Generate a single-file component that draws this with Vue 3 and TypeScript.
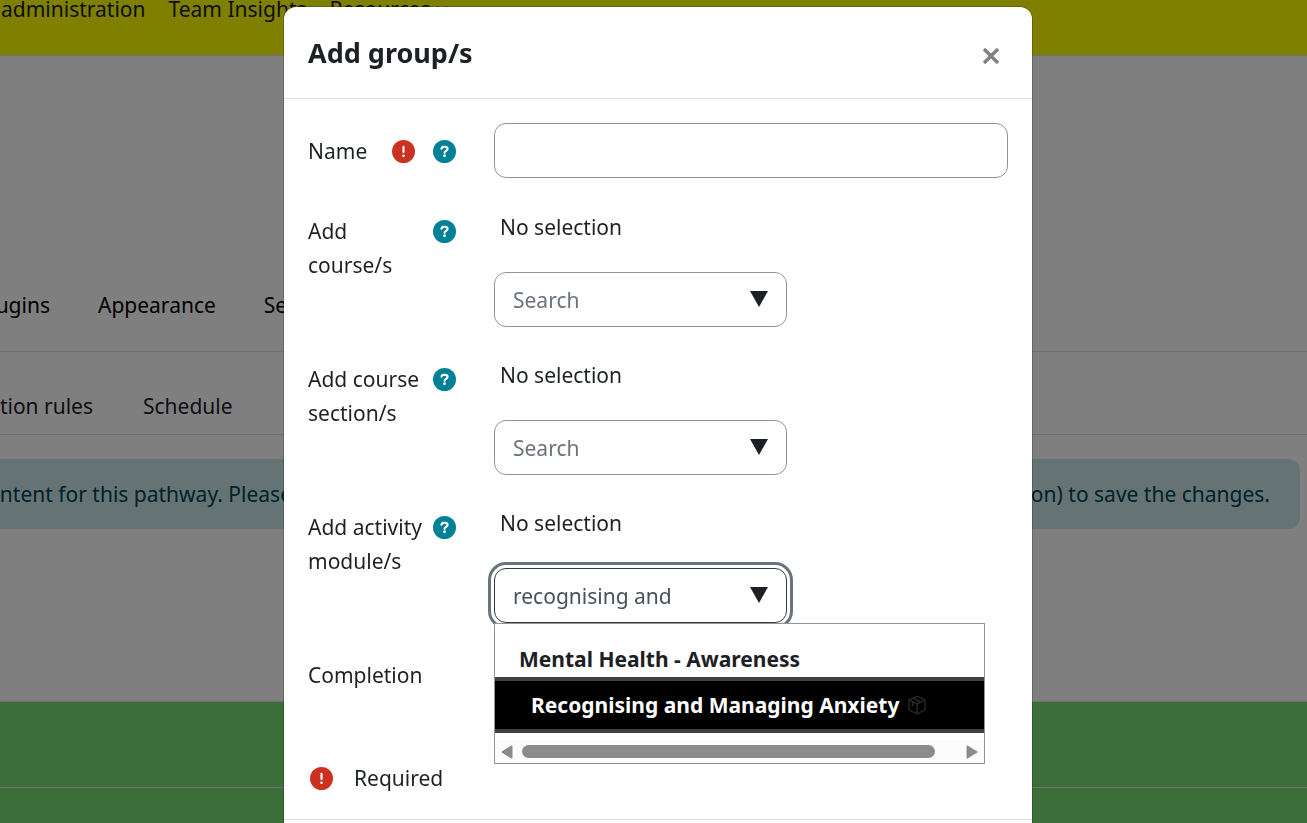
<script setup lang="ts">
import { ref } from 'vue'

interface Picker {
  id: string
  label: string
  value: string
}

const name = ref('')
const pickers = ref<Picker[]>([
  { id: 'courses', label: 'Add course/s', value: '' },
  { id: 'sections', label: 'Add course section/s', value: '' },
  { id: 'modules', label: 'Add activity module/s', value: 'recognising and' },
])
</script>

<template>
  <div class="page">
    <header class="topbar">
      <a href="#">administration</a>
      <a href="#">Team Insights</a>
      <a href="#" class="more">Resources
        <svg width="12" height="8" viewBox="0 0 12 8" aria-hidden="true"><path d="M1 1.5 6 6.5 11 1.5" fill="none" stroke="currentColor" stroke-width="1.6" /></svg>
      </a>
    </header>
    <nav class="primary">
      <a href="#" class="cut">Plugins</a>
      <a href="#">Appearance</a>
      <a href="#">Server</a>
    </nav>
    <nav class="secondary">
      <a href="#" class="cut">Completion rules</a>
      <a href="#">Schedule</a>
    </nav>
    <div class="notice">
      <span class="lead">content for this pathway. Please</span>
      <span>on) to save the changes.</span>
    </div>
    <footer class="sitefoot"><div class="rule"></div></footer>
  </div>

  <div class="overlay">
    <section class="modal" role="dialog" aria-modal="true" aria-labelledby="title">
      <header class="modal-head">
        <h2 id="title">Add group/s</h2>
        <button type="button" class="close" aria-label="Close">
          <svg width="18" height="18" viewBox="0 0 18 18"><path d="M2 2 16 16M16 2 2 16" stroke="#808080" stroke-width="3.4" /></svg>
        </button>
      </header>

      <form class="modal-body" @submit.prevent>
        <div class="row first">
          <div class="caption">
            <label for="name">Name</label>
            <span class="icons">
              <svg class="icon" viewBox="0 0 24 24" role="img" aria-label="Required"><circle cx="12" cy="12" r="12" fill="#ca3120" /><path d="M12 7.2v5.4" stroke="#fff" stroke-width="2.2" stroke-linecap="round" /><circle cx="12" cy="16.4" r="1.4" fill="#fff" /></svg>
              <button type="button" class="help" aria-label="Help with Name">
                <svg class="icon" viewBox="0 0 24 24"><circle cx="12" cy="12" r="12" fill="#008196" /><path d="M8.9 9.2C8.9 7.9 9.8 7.2 11 7.2h1.6c1.5 0 2.6 1 2.6 2.2 0 2-3.1 1.8-3.1 3.8" fill="none" stroke="#fff" stroke-width="2.2" stroke-linecap="round" /><circle cx="12" cy="16.4" r="1.5" fill="#fff" /></svg>
              </button>
            </span>
          </div>
          <input id="name" v-model="name" class="field" type="text">
        </div>

        <div v-for="p in pickers" :key="p.id" class="row">
          <div class="caption">
            <label :for="p.id">{{ p.label }}</label>
            <button type="button" class="help" :aria-label="'Help with ' + p.label">
              <svg class="icon" viewBox="0 0 24 24"><circle cx="12" cy="12" r="12" fill="#008196" /><path d="M8.9 9.2C8.9 7.9 9.8 7.2 11 7.2h1.6c1.5 0 2.6 1 2.6 2.2 0 2-3.1 1.8-3.1 3.8" fill="none" stroke="#fff" stroke-width="2.2" stroke-linecap="round" /><circle cx="12" cy="16.4" r="1.5" fill="#fff" /></svg>
            </button>
          </div>
          <div class="picker">
            <div class="chosen">No selection</div>
            <div class="combo" :class="{ active: p.value }">
              <input :id="p.id" v-model="p.value" type="text" role="combobox" placeholder="Search" :aria-expanded="!!p.value">
              <button type="button" class="arrow" aria-label="Show suggestions">
                <svg width="18" height="16" viewBox="0 0 18 16"><path d="M0 0h18L9 16Z" fill="#1d2125" /></svg>
              </button>
              <div v-if="p.value" class="menu">
                <ul role="listbox" aria-label="Suggestions">
                  <li role="option">Mental Health - Awareness</li>
                  <li role="option" class="current" aria-selected="true">
                    Recognising and Managing Anxiety
                    <svg width="20" height="20" viewBox="0 0 20 20" fill="none" stroke="#2b2e31" stroke-width="1.2" stroke-linejoin="round" aria-hidden="true"><path d="M10 1.2 18 5v10l-8 4-8-4V5ZM2 5l8 4 8-4M10 9v10M6 3.1l8 4M5.5 6.7v4.5" /></svg>
                  </li>
                </ul>
                <div class="scroll" aria-hidden="true">
                  <svg width="12" height="14" viewBox="0 0 12 14"><path d="M10.5 1.5v11L1.5 7Z" fill="#8b8b8b" stroke="#8b8b8b" stroke-width="2" stroke-linejoin="round" /></svg>
                  <div class="track"><div class="thumb"></div></div>
                  <svg width="12" height="14" viewBox="0 0 12 14"><path d="M1.5 1.5v11L10.5 7Z" fill="#8b8b8b" stroke="#8b8b8b" stroke-width="2" stroke-linejoin="round" /></svg>
                </div>
              </div>
            </div>
          </div>
        </div>

        <div class="row last">
          <div class="caption">Completion</div>
        </div>
        <div class="required">
          <svg class="icon" viewBox="0 0 24 24" aria-hidden="true"><circle cx="12" cy="12" r="12" fill="#ca3120" /><path d="M12 7.2v5.4" stroke="#fff" stroke-width="2.2" stroke-linecap="round" /><circle cx="12" cy="16.4" r="1.4" fill="#fff" /></svg>
          <span>Required</span>
        </div>
      </form>
      <footer class="modal-foot"></footer>
    </section>
  </div>
</template>

<style>
body {
  margin: 0;
  overflow: hidden;
  background: #fff;
}
#app {
  font-family: "Segoe UI", "Noto Sans", sans-serif;
  font-size: 21px;
  line-height: 34px;
  color: #1d2125;
}
</style>

<style scoped>
* { box-sizing: border-box; }
a { color: inherit; text-decoration: none; }
button { border: 0; padding: 0; background: none; cursor: pointer; }
svg { display: block; flex: none; }

.page {
  height: 100vh;
  overflow: hidden;
  display: flex;
  flex-direction: column;
  white-space: nowrap;
}
.topbar {
  flex: none;
  height: 56px;
  padding-left: 1px;
  display: flex;
  align-items: flex-start;
  gap: 23px;
  background: #ff0;
  border-bottom: 1px solid #dee2e6;
}
.topbar a { margin-top: -8px; }
.more { display: flex; align-items: center; gap: 6px; }
.primary, .secondary {
  flex: none;
  display: flex;
  border-bottom: 1px solid #dee2e6;
}
.primary {
  height: 296px;
  align-items: flex-end;
  gap: 48px;
  padding-bottom: 29px;
  color: #000;
}
.secondary {
  height: 83px;
  align-items: flex-end;
  gap: 50px;
  padding-bottom: 11px;
}
.cut, .lead { display: flex; justify-content: flex-end; overflow: hidden; }
.primary .cut { width: 50px; }
.secondary .cut { width: 93px; }
.notice {
  flex: none;
  display: flex;
  justify-content: space-between;
  margin: 24px 7px 0 0;
  padding: 18px 30px 18px 0;
  border-radius: 0 12px 12px 0;
  background: #cce6ea;
  color: #00434e;
}
.lead { width: 292px; }
.sitefoot {
  flex: 1;
  margin-top: 172px;
  padding-top: 85px;
  background: #78dc74;
  border-top: 1px solid #dee2e6;
}
.rule { border-top: 1px solid #dee2e6; }

.overlay {
  position: fixed;
  inset: 0;
  overflow: hidden;
  padding: 7px 0 0 9px;
  background: rgba(0, 0, 0, 0.5);
}
.modal {
  max-width: 748px;
  margin: 0 auto;
  background: #fff;
  border-radius: 12px;
  box-shadow: 0 0 0 1px rgba(0, 0, 0, 0.2);
}
.modal-head {
  display: flex;
  align-items: center;
  justify-content: space-between;
  height: 92px;
  padding: 0 32px 0 24px;
  border-bottom: 1px solid #dee2e6;
}
h2 { margin: 0; font-size: 27px; line-height: 36px; }
.close { margin-top: 6px; }
.modal-body { padding: 24px; }
.row {
  display: grid;
  grid-template-columns: 148px 1fr;
  column-gap: 38px;
  margin-bottom: 24px;
}
.first { margin-bottom: 25px; }
.last { min-height: 90px; }
.caption {
  display: flex;
  justify-content: space-between;
  align-items: flex-start;
  padding-top: 11px;
}
.caption label { max-width: 122px; }
.icons { display: flex; gap: 18px; }
.icon { width: 23px; height: 23px; }
.caption .icon { margin-top: 6px; }
input {
  display: block;
  width: 100%;
  height: 55px;
  padding: 0 18px;
  border: 1px solid #8f959e;
  border-radius: 12px;
  background: #fff;
  color: #495057;
  font: inherit;
  outline: 0;
}
input::placeholder { color: #6a737b; opacity: 1; }
.chosen { padding: 7px 6px 28px; }
.combo { position: relative; width: 293px; }
.arrow { position: absolute; right: 19px; top: 19px; }
.active input {
  border-color: #343a40;
  outline: 3px solid #6a737b;
  outline-offset: 3px;
}
.menu {
  position: absolute;
  top: 55px;
  left: 0;
  width: 491px;
  border: 1px solid #8f959e;
  background: #fff;
  font-weight: 700;
}
ul { margin: 0; padding: 18px 0 7px; list-style: none; white-space: nowrap; }
li { display: flex; align-items: center; gap: 8px; padding-left: 24px; line-height: 35px; }
.current {
  height: 56px;
  padding-left: 36px;
  border: solid #404040;
  border-width: 4px 0;
  background: #000;
  color: #fff;
}
.scroll {
  display: flex;
  align-items: center;
  gap: 9px;
  height: 23px;
  padding: 0 6px;
  background: #fcfcfc;
}
.track { flex: 1; }
.thumb { width: 95%; height: 13px; border-radius: 7px; background: #8b8b8b; }
.required { display: flex; align-items: center; gap: 21px; padding-left: 2px; }
.modal-foot { min-height: 90px; border-top: 1px solid #dee2e6; }
</style>
